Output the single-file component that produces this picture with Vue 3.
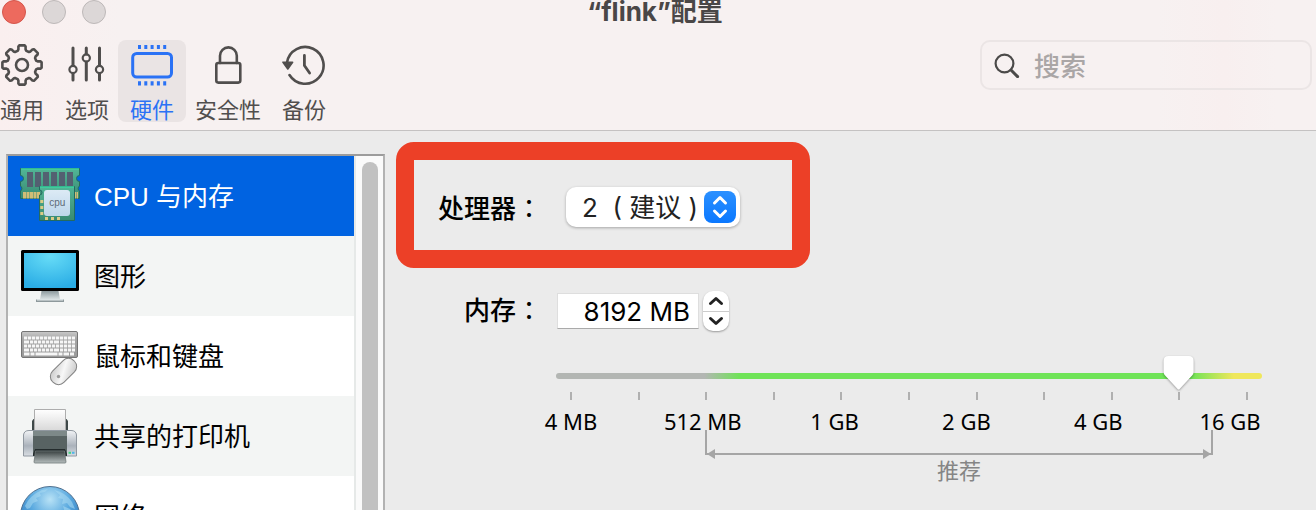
<script setup>
import { ref } from 'vue'

const sections = [
  { id: 'cpu', name: 'CPU 与内存' },
  { id: 'graphics', name: '图形' },
  { id: 'input', name: '鼠标和键盘' },
  { id: 'printer', name: '共享的打印机' },
  { id: 'network', name: '网络' },
]
const active = ref('cpu')

const tabs = [
  { id: 'general', name: '通用' },
  { id: 'options', name: '选项' },
  { id: 'hardware', name: '硬件' },
  { id: 'security', name: '安全性' },
  { id: 'backup', name: '备份' },
]
const activeTab = ref('hardware')

const marks = ['4 MB', '512 MB', '1 GB', '2 GB', '4 GB', '16 GB']
const level = ref(9)
const memory = ref('8192 MB')

const polar = (r, deg) => {
  const a = (deg * Math.PI) / 180
  return `${(22 + r * Math.sin(a)).toFixed(2)} ${(22 - r * Math.cos(a)).toFixed(2)}`
}
const gear =
  'M' +
  Array.from({ length: 8 }, (_, k) => {
    const a = k * 45
    return [
      polar(14.8, a - 17),
      polar(16, a - 13),
      polar(18.8, a - 11),
      polar(19.8, a - 8),
      polar(19.8, a + 8),
      polar(18.8, a + 11),
      polar(16, a + 13),
      polar(14.8, a + 17),
    ].join('L')
  }).join('L') +
  'Z'

const keyRows = [11, 15, 19, 23, 27]
</script>

<template>
  <div class="window">
    <header class="top">
      <div class="titlebar">
        <div class="lights">
          <button class="light close" aria-label="关闭"></button>
          <button class="light" aria-label="最小化"></button>
          <button class="light" aria-label="缩放"></button>
        </div>
        <h1>“flink”配置</h1>
      </div>
      <div class="toolbar">
        <nav class="tabs">
          <button
            v-for="t in tabs"
            :key="t.id"
            class="tab"
            :class="{ on: activeTab === t.id }"
            @click="activeTab = t.id"
          >
            <svg viewBox="0 0 44 44" fill="none" stroke="currentColor" stroke-width="2.6" stroke-linecap="round" stroke-linejoin="round">
              <template v-if="t.id === 'general'">
                <path :d="gear" />
                <circle cx="22" cy="22" r="6" />
              </template>
              <template v-else-if="t.id === 'options'">
                <path d="M8 5V22.5M8 30.5V37M21.3 5V11M21.3 19V37M34.5 5V22.5M34.5 30.5V37" stroke-width="3" />
                <circle cx="8" cy="26.5" r="3.6" stroke-width="2.2" />
                <circle cx="21.3" cy="15" r="3.6" stroke-width="2.2" />
                <circle cx="34.5" cy="26.5" r="3.6" stroke-width="2.2" />
              </template>
              <template v-else-if="t.id === 'hardware'">
                <rect x="2.7" y="10.4" width="38.8" height="23.6" rx="4" stroke-width="3" />
                <path d="M9.5 2v4M15.8 2v4M22.1 2v4M28.4 2v4M34.7 2v4M9.5 38.2v4.2M15.8 38.2v4.2M22.1 38.2v4.2M28.4 38.2v4.2M34.7 38.2v4.2" stroke-width="3" stroke-linecap="butt" />
              </template>
              <template v-else-if="t.id === 'security'">
                <rect x="10.3" y="20" width="24" height="19.6" rx="2" />
                <path d="M14 20V12.8a8.4 8.4 0 0 1 16.8 0V20" />
              </template>
              <template v-else>
                <path d="M5 19.5A18.4 18.4 0 1 1 7.5 32" />
                <path d="M1 19.2H10.6L5.8 26Z" fill="currentColor" stroke-width="1.6" />
                <path d="M22.4 12.5V22.5L27.6 30" stroke-width="2.8" />
              </template>
            </svg>
            <span>{{ t.name }}</span>
          </button>
        </nav>
        <label class="search">
          <svg viewBox="0 0 26 26" fill="none" stroke="#4b4a49" stroke-linecap="round">
            <circle cx="10.5" cy="11.5" r="8.9" stroke-width="2.2" />
            <path d="M17 18l6.6 6.6" stroke-width="3" />
          </svg>
          <input type="search" placeholder="搜索" aria-label="搜索" />
        </label>
      </div>
    </header>

    <div class="body">
      <aside class="sidebar">
        <div class="list">
          <button
            v-for="s in sections"
            :key="s.id"
            class="row"
            :class="{ selected: active === s.id }"
            @click="active = s.id"
          >
            <svg v-if="s.id === 'cpu'" viewBox="0 0 60 60">
              <defs>
                <linearGradient id="pcb" x2="0" y2="1"><stop stop-color="#52b596" /><stop offset="1" stop-color="#398a72" /></linearGradient>
                <linearGradient id="die" x2="0" y2="1"><stop stop-color="#dceaf5" /><stop offset="1" stop-color="#bdd6ea" /></linearGradient>
              </defs>
              <path d="M.5 2.5H59.500V9.500A3 3 0 0 0 59.500 15.500V20A3 3 0 0 0 59.500 25V32.500H.5V25A3 3 0 0 0 .5 20V15.500A3 3 0 0 0 .5 9.500Z" fill="url(#pcb)" stroke="#236b60" />
              <path d="M1 3H59" stroke="#3bd3a0" stroke-width="1.4" />
              <path d="M3 29.2H20M53 29.2H58" stroke="#d2bd76" stroke-width="6.6" stroke-dasharray="3 .5" />
              <path d="M7 13.5h6M15 13.5h6M23 13.5h6M31 13.5h6M39 13.5h6M47 13.5h6" stroke="#536071" stroke-width="15" />
              <path d="M19.500 20.500H54.500V54.500H19.500V29a2.500 2.500 0 0 0 0-5Z" fill="url(#pcb)" stroke="#236b60" />
              <path d="M20 21H54" stroke="#3bd3a0" stroke-width="1.4" />
              <path d="M21.800 34v3M21.800 40v3M21.800 46v3M25 52.500h3M31 52.500h3M37 52.500h3" stroke="#dccb87" stroke-width="3" />
              <rect x="24" y="24" width="26" height="26" rx="3" fill="url(#die)" />
              <text x="37.300" y="40" text-anchor="middle" class="chip-text">cpu</text>
            </svg>
            <svg v-else-if="s.id === 'graphics'" viewBox="0 0 60 60">
              <defs>
                <radialGradient id="screen" cx=".5" cy=".1" r=".9"><stop stop-color="#66dcf7" /><stop offset="1" stop-color="#2bade5" /></radialGradient>
                <linearGradient id="stand" x2="0" y2="1"><stop stop-color="#8c9a9e" /><stop offset="1" stop-color="#dbe3e5" /></linearGradient>
              </defs>
              <rect x="1" y="4" width="58" height="41" rx="1.500" fill="#000" />
              <rect x="4" y="7" width="52" height="35" fill="url(#screen)" />
              <path d="M21.500 45H38.500L40 53.500H20Z" fill="url(#stand)" />
              <path d="M16 53.500H44V56H16Z" fill="#8e999c" />
              <path d="M17 53.800H43" stroke="#dce4e6" stroke-width="1.500" />
            </svg>
            <svg v-else-if="s.id === 'input'" viewBox="0 0 60 60">
              <defs>
                <linearGradient id="keys" x2="0" y2="1"><stop stop-color="#c9c9c9" /><stop offset=".3" stop-color="#a5a5a5" /><stop offset="1" stop-color="#9a9a9a" /></linearGradient>
                <linearGradient id="mouse" x2="1" y2="1"><stop stop-color="#c4c4c4" /><stop offset=".5" stop-color="#f7f7f7" /><stop offset="1" stop-color="#c2c2c2" /></linearGradient>
              </defs>
              <rect x="1.500" y="5.500" width="56" height="26" rx="1.500" fill="url(#keys)" stroke="#757575" />
              <path
                v-for="(y, i) in keyRows"
                :key="y"
                :d="`M4 ${y + 1}H55`"
                stroke="#f6f6f6"
                stroke-width="3"
                :stroke-dasharray="i === 4 ? '5.500 1 4 1 22 1 4 1' : i % 2 ? '5 1 3.200 .8 3.200 .8 3.200 .8 3.200 .8 3.200 .8 3.200 .8' : '3.200 .8'"
              />
              <rect x="28.500" y="37.500" width="30" height="16" rx="7.500" transform="rotate(-45 43.500 45.500)" fill="url(#mouse)" stroke="#828282" />
              <circle cx="38.500" cy="50.500" r="1.700" fill="#999" />
            </svg>
            <svg v-else-if="s.id === 'printer'" viewBox="0 0 60 60">
              <defs>
                <linearGradient id="paper" x2="0" y2="1"><stop stop-color="#fff" /><stop offset="1" stop-color="#d6d6d6" /></linearGradient>
                <linearGradient id="case" x2="0" y2="1"><stop stop-color="#f2f4f6" /><stop offset=".6" stop-color="#aab2bb" /><stop offset="1" stop-color="#d9dee3" /></linearGradient>
                <linearGradient id="tray" x2="0" y2="1"><stop stop-color="#394141" /><stop offset="1" stop-color="#b6bebe" /></linearGradient>
              </defs>
              <path d="M12 25V15l1.500-2H46.500L48 15V25Z" fill="#3e4848" />
              <path d="M14.500 3.500H45.500V26H14.500Z" fill="url(#paper)" stroke="#adadad" />
              <path d="M3.500 50V29Q4 24.500 9 24.500H51Q56 24.500 56.500 29V50Z" fill="url(#case)" stroke="#9098a0" />
              <path d="M13 25H47V50H13Z" fill="#586363" />
              <path d="M13 25H47V30H13Z" fill="#7d8989" />
              <path d="M15 43H45L47 48V50H13V48Z" fill="#242c2d" />
              <path d="M15.500 45H44.500L46 56Q46 57 45 57H15Q14 57 14 56Z" fill="url(#tray)" stroke="#707979" stroke-width=".8" />
              <path d="M48.500 46.800H51" stroke="#43d47d" stroke-width="2" />
              <path d="M52 46.800H54.500" stroke="#4fb7ea" stroke-width="2" />
            </svg>
            <svg v-else viewBox="0 0 60 60">
              <defs>
                <radialGradient id="globe" cx=".5" cy=".22" r=".75"><stop stop-color="#b8e2f6" /><stop offset=".45" stop-color="#5aa9df" /><stop offset="1" stop-color="#1f68b4" /></radialGradient>
              </defs>
              <circle cx="30" cy="30" r="29.500" fill="url(#globe)" stroke="#52718f" />
              <path d="M5 20Q10 9 22 4L28 3 25 6 20 7 21 10 16 12 18 15 13 17 10 22 7 23ZM34 4Q45 6 52 16L55 23 50 21 47 17 42 18 43 13 38 12 40 9ZM43 20 50 23 56 30 46 30Z" fill="#a9daf2" opacity=".55" />
            </svg>
            <span>{{ s.name }}</span>
          </button>
        </div>
        <div class="scrollbar"><div class="thumb"></div></div>
      </aside>

      <main class="panel">
        <div class="highlight">
          <label for="processors">处理器<span class="colon">：</span></label>
          <div class="popup">
            <select id="processors">
              <option>2&nbsp; ( 建议 )</option>
            </select>
            <svg viewBox="0 0 32 32" fill="none" stroke="#fff" stroke-width="3" stroke-linecap="round" stroke-linejoin="round">
              <path d="M10.500 12 16 6.500 21.500 12M10.500 20 16 25.500 21.500 20" />
            </svg>
          </div>
        </div>

        <div class="memory">
          <label for="memory">内存<span class="colon">：</span></label>
          <input id="memory" v-model="memory" type="text" />
          <div class="stepper">
            <button aria-label="增加"><svg viewBox="0 0 16 10"><path d="M2.500 7.500 8 2.500 13.500 7.500" /></svg></button>
            <button aria-label="减少"><svg viewBox="0 0 16 10"><path d="M2.500 2.500 8 7.500 13.500 2.500" /></svg></button>
          </div>
        </div>

        <div class="scale">
          <div class="slider">
            <div class="track"></div>
            <input v-model="level" type="range" min="0" max="10" aria-label="内存大小" />
          </div>
          <div class="ticks"><i v-for="n in 11" :key="n"></i></div>
          <div class="marks"><span v-for="m in marks" :key="m">{{ m }}</span></div>
          <div class="range">
            <svg class="arrow" viewBox="0 0 8 10"><path d="M0 5 8 0V10Z" fill="#a5a5a5" /></svg>
            <svg class="arrow end" viewBox="0 0 8 10"><path d="M8 5 0 0V10Z" fill="#a5a5a5" /></svg>
          </div>
          <p class="hint">推荐</p>
        </div>
      </main>
    </div>
  </div>
</template>

<style>
body {
  background: #ebebeb;
}
</style>

<style scoped>
.window {
  height: 100vh;
  display: flex;
  flex-direction: column;
  overflow: hidden;
  background: #ebebeb;
  color: #000;
  font-family: "Liberation Sans", "Noto Sans CJK SC", sans-serif;
  font-size: 26px;
}
.window * {
  box-sizing: border-box;
}
button,
input,
select {
  font: inherit;
  color: inherit;
  border: 0;
  padding: 0;
  margin: 0;
  background: none;
}
svg {
  display: block;
  flex: none;
}

/* Header */
.top {
  flex: none;
  border-bottom: 1px solid #c4c2c2;
  padding-bottom: 8px;
  background: linear-gradient(90deg, #faefef 0, #f7f1f1 120px, #f7f1f1 88%, #f8efef 93%, #f7f1f1 97%);
}
.titlebar {
  display: grid;
  grid-template-columns: 1fr auto 1fr;
  height: 24px;
  padding: 0 8px 0 2px;
}
.lights {
  display: flex;
  gap: 16px;
}
.light {
  width: 24px;
  height: 24px;
  border-radius: 50%;
  background: #dcd7d7;
  border: 1px solid #bdb8b8;
}
.close {
  background: #ed6a5e;
  border-color: #d5554b;
}
h1 {
  margin: 0;
  font-family: Inter, "Noto Sans CJK SC", sans-serif;
  font-size: 26px;
  line-height: 24px;
  font-weight: 700;
  color: #4a4747;
}
.toolbar {
  display: flex;
  justify-content: space-between;
  margin-top: 16px;
  padding-right: 4px;
}
.tabs {
  display: flex;
  gap: 21px;
}
.tab {
  margin: 0 -12px;
  padding: 3px 12px 0;
  height: 82px;
  display: flex;
  flex-direction: column;
  align-items: center;
  gap: 9px;
  border-radius: 8px;
  font-family: "Noto Sans CJK SC", sans-serif;
  font-size: 22px;
  line-height: 24px;
  color: #504e4d;
}
.tab svg {
  width: 44px;
  height: 44px;
}
.tab.on {
  background: #eae4e4;
  color: #2a72f5;
}
.search {
  display: flex;
  align-items: center;
  gap: 14px;
  width: 332px;
  height: 50px;
  padding: 0 12px;
  border: 2px solid #ebe5e5;
  border-radius: 10px;
}
.search svg {
  width: 26px;
  height: 26px;
}
.search input {
  flex: 1;
  min-width: 0;
  padding-top: 4px;
  outline: 0;
}
.search input::placeholder {
  color: #aaa6a6;
}

/* Section list */
.body {
  flex: 1;
  min-height: 0;
  display: flex;
}
.sidebar {
  flex: none;
  display: flex;
  width: 379px;
  margin: 23px 0 0 6px;
  border: 2px solid #b2b2b2;
  border-top-color: #9c9c9c;
  border-bottom: 0;
  overflow: hidden;
}
.list {
  flex: 1;
}
.row {
  display: flex;
  align-items: center;
  gap: 14px;
  width: 100%;
  height: 80px;
  padding: 0 12px;
  background: #fff;
  text-align: left;
}
.row:nth-child(even) {
  background: #f3f5f4;
}
.row.selected {
  background: #0063e1;
  color: #fff;
}
.row svg {
  width: 60px;
  height: 60px;
}
.row span {
  padding-bottom: 3px;
}
.chip-text {
  font-size: 10px;
  fill: #5d6b78;
}
.scrollbar {
  width: 29px;
  padding: 6px 5px 0 6px;
  border-left: 2px solid #e6e9e8;
  background: #fafafa;
}
.thumb {
  width: 16px;
  height: 100%;
  border-radius: 8px 8px 0 0;
  background: #c1c1c1;
}

/* Settings */
.panel {
  flex: 1;
  min-width: 0;
  font-family: Inter, "Noto Sans CJK SC", sans-serif;
}
.highlight {
  display: flex;
  align-items: center;
  width: 414px;
  margin: 11px 0 0 11px;
  padding: 27px 24px 23px;
  border: 18px solid #ec4027;
  border-radius: 18px;
}
label {
  font-weight: 500;
  line-height: 40px;
}
.highlight label {
  padding-top: 4px;
  margin: 0 24px 0 0;
  line-height: 36px;
}
.colon {
  font-family: "Noto Sans CJK JP", sans-serif;
  font-weight: 400;
  line-height: 1;
}
.popup {
  position: relative;
  width: 174px;
}
.popup select {
  display: block;
  appearance: none;
  width: 100%;
  height: 40px;
  padding-left: 16px;
  border-radius: 10px;
  background: #fff;
  color: #222;
  box-shadow: 0 1px 3px rgba(0, 0, 0, 0.3);
}
.popup svg {
  position: absolute;
  right: 4px;
  top: 4px;
  width: 32px;
  height: 32px;
  border-radius: 8px;
  background: linear-gradient(#2b90ff, #0a78ff);
  pointer-events: none;
}
.memory {
  display: flex;
  align-items: center;
  margin-top: 23px;
}
.memory label {
  width: 157px;
  margin-right: 15px;
  text-align: right;
}
.memory input {
  width: 142px;
  height: 36px;
  margin-right: 4px;
  padding-right: 8px;
  text-align: right;
  background: #fff;
  border: 1px solid #dedede;
  border-bottom-color: #aaa;
}
.stepper {
  width: 26px;
  height: 40px;
  display: flex;
  flex-direction: column;
  border-radius: 10px;
  background: #fff;
  box-shadow: 0 1px 2px rgba(0, 0, 0, 0.35);
}
.stepper button {
  flex: 1;
  display: flex;
  align-items: center;
  justify-content: center;
}
.stepper button + button {
  border-top: 1px solid #ccc;
}
.stepper svg {
  width: 16px;
  height: 10px;
  fill: none;
  stroke: #222;
  stroke-width: 3;
  stroke-linecap: round;
  stroke-linejoin: round;
}

/* Memory scale */
.scale {
  margin: 24px 54px 0 171px;
}
.slider {
  position: relative;
  height: 36px;
}
.track {
  position: absolute;
  inset: 18px 0 auto;
  height: 6px;
  border-radius: 3px;
  background: linear-gradient(90deg, #b3b6b3 21%, #6fe357 26%, #6fe357 90%, #efe75b 96%);
}
.slider input {
  position: relative;
  display: block;
  appearance: none;
  width: 100%;
  height: 36px;
  filter: drop-shadow(0 1px 1px rgba(0, 0, 0, 0.35));
}
.slider input::-webkit-slider-thumb {
  appearance: none;
  width: 32px;
  height: 36px;
  background: #fff;
  clip-path: path("M1 6Q1 1 6 1H26Q31 1 31 6V17Q31 19 29.500 20.500L17 34Q16 35 15 34L2.500 20.500Q1 19 1 17Z");
}
.ticks {
  display: flex;
  justify-content: space-between;
  margin-top: 1px;
  padding: 0 14px;
}
.ticks i {
  width: 2px;
  height: 8px;
  background: #b0b0b0;
}
.marks {
  display: grid;
  grid-template-columns: repeat(6, 1fr);
  margin: 13px -34px 0 -51px;
  text-align: center;
  font-family: "Noto Sans", sans-serif;
  font-size: 22px;
  line-height: 16px;
}
.range {
  position: relative;
  height: 25px;
  margin: 1px 49px 0 149px;
  border: 2px solid #a5a5a5;
  border-top: 0;
}
.arrow {
  position: absolute;
  left: 0;
  bottom: -6px;
  width: 8px;
  height: 10px;
}
.arrow.end {
  left: auto;
  right: 0;
}
.hint {
  margin: 4px 49px 0 149px;
  text-align: center;
  font-size: 22px;
  line-height: 24px;
  color: #858585;
}
</style>
